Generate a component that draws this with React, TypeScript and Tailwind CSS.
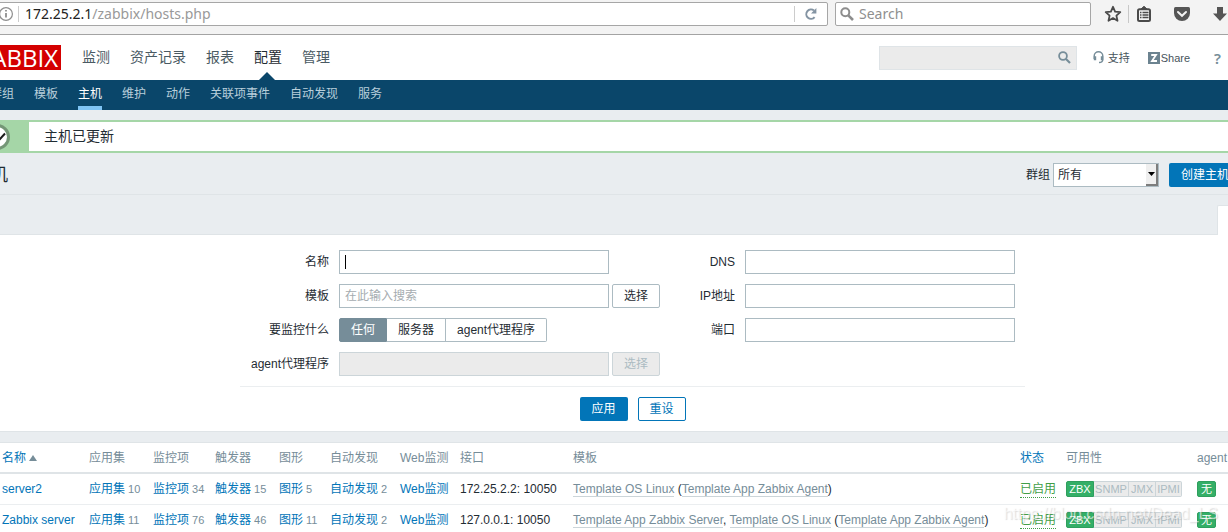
import React, { useState } from "react";

const fieldClass = "h-6 w-[270px] border border-[#acbbc2] bg-white px-[5px] outline-none placeholder:text-[#a5acb0]";
const labelClass = "text-right text-[#1f2c33]";

const mainMenu = ["监测", "资产记录", "报表", "配置", "管理"];
const subMenu = ["群组", "模板", "主机", "维护", "动作", "关联项事件", "自动发现", "服务"];

type Host = {
  name: string;
  apps: number;
  items: number;
  triggers: number;
  graphs: number;
  discovery: number;
  address: string;
  templates: React.ReactNode;
};

function TemplateLink({ children }: { children: string }) {
  return (
    <a href="#template" className="border-b border-[#ccd5d9] text-[#768d99]">
      {children}
    </a>
  );
}

const hosts: Host[] = [
  {
    name: "server2",
    apps: 10,
    items: 34,
    triggers: 15,
    graphs: 5,
    discovery: 2,
    address: "172.25.2.2: 10050",
    templates: (
      <>
        <TemplateLink>Template OS Linux</TemplateLink> (<TemplateLink>Template App Zabbix Agent</TemplateLink>)
      </>
    ),
  },
  {
    name: "Zabbix server",
    apps: 11,
    items: 76,
    triggers: 46,
    graphs: 11,
    discovery: 2,
    address: "127.0.0.1: 10050",
    templates: (
      <>
        <TemplateLink>Template App Zabbix Server</TemplateLink>, <TemplateLink>Template OS Linux</TemplateLink> (
        <TemplateLink>Template App Zabbix Agent</TemplateLink>)
      </>
    ),
  },
];

function BrowserBar() {
  return (
    <div className="flex h-[35px] items-start border-b border-[#a3a3a3] bg-[#f3f3f3] pt-[2px] font-['Noto_Sans',sans-serif] text-[14px]">
      <div className="-ml-1 flex h-6 flex-1 items-center rounded-[2px] border border-[#a6a6a6] bg-white">
        <svg width="16" height="16" viewBox="0 0 16 16" className="ml-px shrink-0" fill="none" stroke="#8e8e8e">
          <circle cx="8" cy="8" r="6.4" strokeWidth="1.2" />
          <path d="M8 7v4.5M8 4v1.6" strokeWidth="1.8" />
        </svg>
        <span className="ml-1 h-4 w-px bg-[#cccccc]" />
        <div
          role="textbox"
          aria-label="URL"
          contentEditable
          suppressContentEditableWarning
          spellCheck={false}
          className="ml-[6px] flex-1 whitespace-nowrap leading-6 text-[#999999] outline-none"
        >
          <span className="text-[#222222]">172.25.2.1</span>/zabbix/hosts.php
        </div>
        <span className="h-4 w-px bg-[#cccccc]" />
        <button aria-label="Reload" className="flex w-8 justify-center">
          <svg width="14" height="14" viewBox="0 0 14 14" fill="none" stroke="#8494a3" strokeWidth="2">
            <path d="M10.6 10.2A4.7 4.7 0 1 1 10 3.5" />
            <path d="M12.4 1v5.4H7z" fill="#8494a3" stroke="none" />
          </svg>
        </button>
      </div>
      <div className="ml-[7px] flex h-6 w-[256px] items-center rounded-[2px] border border-[#a6a6a6] bg-white">
        <svg width="14" height="14" viewBox="0 0 14 14" className="ml-1 shrink-0" fill="none" stroke="#8d8d8d">
          <circle cx="5.3" cy="5.3" r="4" strokeWidth="2" />
          <path d="M8.3 8.3l4.7 4.7" strokeWidth="2.6" />
        </svg>
        <input
          aria-label="Search the web"
          placeholder="Search"
          className="ml-[5px] min-w-0 flex-1 bg-transparent leading-6 outline-none placeholder:text-[#8f8f8f]"
        />
      </div>
      <div className="flex h-6 shrink-0 items-center pl-[13px]">
        <button aria-label="Bookmark">
          <svg width="18" height="18" viewBox="0 0 18 18" fill="none" stroke="#4a4a4a" strokeWidth="1.8" strokeLinejoin="round">
            <path d="M9 1.8l2.1 4.8 5.2.5-3.9 3.5 1.1 5.2L9 13.1l-4.5 2.7 1.1-5.2L1.7 7.1l5.2-.5z" />
          </svg>
        </button>
        <span className="ml-[6px] h-[18px] w-px bg-[#c8c8c8]" />
        <button aria-label="Library" className="ml-[7px]">
          <svg width="16" height="16" viewBox="0 0 16 16" fill="none" stroke="#4a4a4a">
            <path d="M5 3L8 .3 11 3z" fill="#4a4a4a" />
            <rect x="2" y="3.2" width="12" height="11.8" rx="1.5" strokeWidth="2" />
            <path d="M4 6.5h1.5M4 9h1.5M4 11.5h1.5M6.5 6.5h6M6.5 9h6M6.5 11.5h6" strokeWidth="1.3" />
          </svg>
        </button>
        <button aria-label="Pocket" className="ml-[22px]">
          <svg width="16" height="16" viewBox="0 0 16 16">
            <path d="M1.5 1h13q1.5 0 1.5 1.5v4.5a8 8 0 0 1-16 0V2.5q0-1.5 1.5-1.5z" fill="#555555" />
            <path d="M4 6l4 3.8L12 6" fill="none" stroke="#f3f3f3" strokeWidth="2" strokeLinecap="round" />
          </svg>
        </button>
        <button aria-label="Downloads" className="ml-[22px]">
          <svg width="16" height="16" viewBox="0 0 16 16" fill="#555555">
            <path d="M5 1h6v6.500h4l-7 7.500L1 7.500h4z" />
          </svg>
        </button>
      </div>
    </div>
  );
}

function Header() {
  return (
    <header>
      <div className="flex h-[45px] items-center bg-white">
        <a
          href="#home"
          className="-ml-[30px] flex h-[25px] w-[91px] shrink-0 items-center justify-end bg-[#d40000] pr-[3px] font-['Open_Sans',sans-serif] text-[24px] text-white"
        >
          ZABBIX
        </a>
        <nav className="ml-[21px] flex h-full gap-5 text-[14px] leading-[45px] text-[#4a5a63]">
          {mainMenu.map((item) => (
            <a key={item} href="#menu" className={item === "配置" ? "relative text-[#1f2c33]" : ""}>
              {item}
              {item === "配置" && (
                <svg width="16" height="8" viewBox="0 0 16 8" className="absolute bottom-0 left-[5px]" fill="#0a466a">
                  <path d="M0 8l8-8 8 8z" />
                </svg>
              )}
            </a>
          ))}
        </nav>
        <div className="ml-auto flex h-6 w-[198px] items-center border border-[#dfe4e7] bg-[#ebebeb]">
          <input aria-label="搜索" className="min-w-0 flex-1 bg-transparent px-1 outline-none" />
          <button aria-label="执行搜索" className="mr-[5px]">
            <svg width="13" height="13" viewBox="0 0 13 13" fill="none" stroke="#768d99" strokeWidth="1.8">
              <circle cx="5" cy="5" r="3.9" />
              <path d="M8 8l4 4" strokeWidth="2.2" />
            </svg>
          </button>
        </div>
        <div className="ml-4 flex items-center pr-[7px] text-[11px] text-[#47545c]">
          <a href="#support" className="flex items-center gap-1">
            <svg width="11" height="13" viewBox="0 0 11 13" fill="none" stroke="#768d99">
              <path d="M1.2 8V5a4.3 4.3 0 0 1 8.6 0v3.5q0 3-3.8 3" strokeWidth="1.4" />
              <path d="M2 5.2v4M9 5.2v4" strokeWidth="2.4" />
            </svg>
            支持
          </a>
          <a href="#share" className="ml-[18px] flex items-center gap-px">
            <svg width="12" height="12" viewBox="0 0 12 12">
              <path d="M0 0h12v12H0z" fill="#6c8390" />
              <path d="M3.2 3h4.8L4 9h5" fill="none" stroke="#ffffff" strokeWidth="1.8" />
            </svg>
            Share
          </a>
          <a href="#help" className="ml-6 font-['Noto_Sans',sans-serif] text-[15px] font-semibold text-[#768d99]">?</a>
        </div>
      </div>
      <nav className="flex h-[30px] gap-5 bg-[#0a466a] text-[12px] leading-[28px] text-[#b9cfdb]">
        {subMenu.map((item, i) => (
          <a
            key={item}
            href="#submenu"
            className={
              item === "主机"
                ? "border-b-[4px] border-[#7fc4f4] text-white"
                : i === 0
                  ? "-ml-[10px]"
                  : ""
            }
          >
            {item}
          </a>
        ))}
      </nav>
    </header>
  );
}

function FilterForm() {
  const [kind, setKind] = useState("任何");
  const kinds = ["任何", "服务器", "agent代理程序"];
  return (
    <form className="border-b border-[#dfe4e7] bg-white pt-[15px] pb-[10px] pl-[37px]" onSubmit={(e) => e.preventDefault()}>
      <div className="mx-auto w-[785px]">
        <div className="flex border-b border-[#ebeef0] pb-[10px]">
          <div className="grid w-[420px] grid-cols-[89px_1fr] gap-[10px] leading-6">
            <label htmlFor="name" className={labelClass}>名称</label>
            <div className="relative flex">
              <input id="name" className={fieldClass} />
              <span className="absolute top-[5px] left-[6px] h-[14px] w-px bg-black" />
            </div>
            <label htmlFor="template" className={labelClass}>模板</label>
            <div className="flex gap-[3px]">
              <input id="template" placeholder="在此输入搜索" className={fieldClass} />
              <button type="button" className="h-6 w-12 rounded-[2px] border border-[#acbbc2] bg-white leading-[22px]">选择</button>
            </div>
            <span className={labelClass}>要监控什么</span>
            <div role="radiogroup" aria-label="要监控什么" className="flex">
              {kinds.map((k) => (
                <label
                  key={k}
                  className={
                    k === kind
                      ? "relative h-6 rounded-l-[2px] border border-[#768d99] bg-[#768d99] px-[11px] leading-[22px] text-white"
                      : "relative h-6 border border-l-0 border-[#acbbc2] px-[11px] leading-[22px] last:rounded-r-[2px]"
                  }
                >
                  <input type="radio" name="kind" className="sr-only" checked={k === kind} onChange={() => setKind(k)} />
                  {k}
                </label>
              ))}
            </div>
            <label htmlFor="proxy" className={labelClass}>agent代理程序</label>
            <div className="flex gap-[3px]">
              <input id="proxy" disabled className="h-6 w-[270px] border border-[#ccd5d9] bg-[#ebebeb]" />
              <button type="button" disabled className="h-6 w-12 rounded-[2px] border border-[#ccd5d9] bg-[#ebebeb] leading-[22px] text-[#acbbc2]">选择</button>
            </div>
          </div>
          <div className="grid grid-cols-[75px_270px] content-start gap-[10px] leading-6">
            <label htmlFor="dns" className={labelClass}>DNS</label>
            <input id="dns" className={fieldClass} />
            <label htmlFor="ip" className={labelClass}>IP地址</label>
            <input id="ip" className={fieldClass} />
            <label htmlFor="port" className={labelClass}>端口</label>
            <input id="port" className={fieldClass} />
          </div>
        </div>
        <div className="flex justify-center gap-[10px] pt-[10px]">
          <button type="submit" className="h-6 w-12 rounded-[2px] bg-[#0275b8] text-white">应用</button>
          <button type="reset" className="h-6 w-12 rounded-[2px] border border-[#0275b8] bg-white text-[#0275b8]">重设</button>
        </div>
      </div>
    </form>
  );
}

function CountLink({ label, count }: { label: string; count: number }) {
  return (
    <td className="pl-[2px]">
      <a href="#list" className="text-[#0275b8]">{label}</a>
      <span className="pl-[3px] text-[11px] text-[#768d99]">{count}</span>
    </td>
  );
}

function Availability() {
  return (
    <div className="flex h-4 w-[116px] text-[11px] leading-[14px]">
      <span className="w-7 rounded-l-[2px] border border-[#2f9f5e] bg-[#34af67] text-center text-white">ZBX</span>
      <span className="w-[35px] border-y border-r border-[#ccd5d9] bg-[#ebebeb] text-center text-[#acbbc2]">SNMP</span>
      <span className="w-[27px] border-y border-r border-[#ccd5d9] bg-[#ebebeb] text-center text-[#acbbc2]">JMX</span>
      <span className="w-[26px] rounded-r-[2px] border-y border-r border-[#ccd5d9] bg-[#ebebeb] text-center text-[#acbbc2]">IPMI</span>
    </div>
  );
}

function HostTable() {
  return (
    <table className="w-full table-fixed border-separate border-spacing-0 border-t border-[#dfe4e7] bg-white text-left whitespace-nowrap [&_td]:h-[31px] [&_td]:border-b [&_td]:border-[#ebeef0] [&_th]:h-[31px] [&_th]:border-b-2 [&_th]:border-[#dfe4e7] [&_th]:pl-[2px] [&_th]:font-normal">
      <colgroup>
        <col className="w-[87px]" />
        <col className="w-[64px]" />
        <col className="w-[62px]" />
        <col className="w-[64px]" />
        <col className="w-[51px]" />
        <col className="w-[70px]" />
        <col className="w-[60px]" />
        <col className="w-[113px]" />
        <col />
        <col className="w-[46px]" />
        <col className="w-[131px]" />
        <col className="w-[33px]" />
      </colgroup>
      <thead className="text-[#768d99]">
        <tr>
          <th>
            <a href="#sort" className="text-[#0275b8]">名称</a>
            <svg width="8" height="6" viewBox="0 0 8 6" className="ml-[3px] inline-block" fill="#768d99">
              <path d="M0 6l4-6 4 6z" />
            </svg>
          </th>
          <th>应用集</th>
          <th>监控项</th>
          <th>触发器</th>
          <th>图形</th>
          <th>自动发现</th>
          <th>Web监测</th>
          <th>接口</th>
          <th>模板</th>
          <th><a href="#sort" className="text-[#0275b8]">状态</a></th>
          <th>可用性</th>
          <th>agent</th>
        </tr>
      </thead>
      <tbody>
        {hosts.map((h) => (
          <tr key={h.name}>
            <td className="pl-[2px]"><a href="#host" className="text-[#0275b8]">{h.name}</a></td>
            <CountLink label="应用集" count={h.apps} />
            <CountLink label="监控项" count={h.items} />
            <CountLink label="触发器" count={h.triggers} />
            <CountLink label="图形" count={h.graphs} />
            <CountLink label="自动发现" count={h.discovery} />
            <td className="pl-[2px]"><a href="#web" className="text-[#0275b8]">Web监测</a></td>
            <td className="pl-[2px]">{h.address}</td>
            <td className="pl-[2px]">{h.templates}</td>
            <td className="pl-[2px]">
              <a href="#status" className="inline-block border-b border-dotted border-[#429e47] leading-4 text-[#429e47]">已启用</a>
            </td>
            <td className="pl-[2px]"><Availability /></td>
            <td className="pl-[2px]">
              <span className="block h-4 w-[19px] rounded-[2px] border border-[#2f9f5e] bg-[#34af67] text-center text-[11px] leading-[14px] text-white">无</span>
            </td>
          </tr>
        ))}
      </tbody>
    </table>
  );
}

export default function App() {
  return (
    <div className="relative h-screen overflow-hidden bg-[#e9edf0] font-['Liberation_Sans','Noto_Sans_CJK_SC',sans-serif] text-[12px] leading-[18px] text-[#1f2c33]">
      <BrowserBar />
      <Header />
      <main>
        <div className="mt-[10px] flex h-[33px] border-y-2 border-[#a5d6a7] bg-white">
          <div className="flex w-[29px] items-center bg-[#a5d6a7]">
            <svg width="26" height="26" viewBox="0 0 26 26" className="-ml-4 shrink-0">
              <circle cx="13" cy="13" r="11.5" fill="#ffffff" stroke="#749676" strokeWidth="3" />
              <path d="M12 13l3 3 6-6.5" fill="none" stroke="#1b1b1b" strokeWidth="2" />
            </svg>
          </div>
          <p className="pl-[15px] text-[14px] leading-[28px]">主机已更新</p>
        </div>
        <div className="flex h-[42px] items-center border-b border-[#dfe4e7] pt-[2px]">
          <h1 className="-ml-[28px] text-[18px]">主机</h1>
          <label htmlFor="group" className="ml-auto">群组</label>
          <div className="relative ml-[3px] h-6 w-[106px]">
            <select id="group" className="h-6 w-full appearance-none border border-[#acbbc2] bg-white pl-1 outline-none">
              <option>所有</option>
            </select>
            <span className="pointer-events-none absolute top-px right-px flex h-[22px] w-3 items-center justify-center border-r-2 border-b-2 border-[#7d7d7d] bg-[#efefef]">
              <svg width="7" height="4" viewBox="0 0 7 4" fill="#000000">
                <path d="M0 0h7L3.5 4z" />
              </svg>
            </span>
          </div>
          <button className="-mr-[13px] ml-[10px] h-6 w-[72px] rounded-[2px] bg-[#0275b8] text-white">创建主机</button>
        </div>
        <div className="flex pt-[10px]">
          <div className="h-[30px] flex-1 border-b border-[#dfe4e7]" />
          <div className="h-[30px] w-[11px] rounded-tl-[2px] border-t border-l border-[#dfe4e7] bg-white" />
        </div>
        <FilterForm />
        <div className="mt-[10px]">
          <HostTable />
        </div>
      </main>
      <span className="pointer-events-none absolute right-[10px] bottom-[9px] text-[16px] text-white/60 [text-shadow:1px_1px_1px_rgb(120_120_120/0.25)]">
        https://blog.csdn.net/Dead_LS
      </span>
    </div>
  );
}
